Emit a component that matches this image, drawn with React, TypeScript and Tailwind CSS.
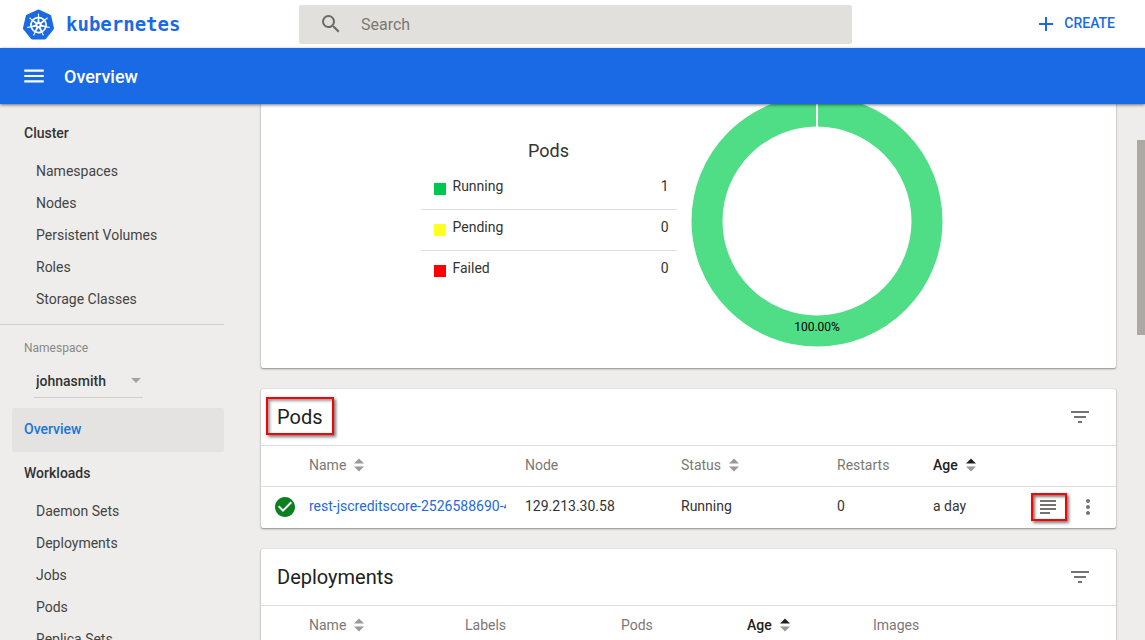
import React from "react";
import {
  MdAdd,
  MdCheckCircle,
  MdFilterList,
  MdMenu,
  MdMoreVert,
  MdSearch,
  MdSubject,
} from "react-icons/md";
import { SiKubernetes } from "react-icons/si";

const clusterItems = ["Namespaces", "Nodes", "Persistent Volumes", "Roles", "Storage Classes"];
const workloadItems = ["Daemon Sets", "Deployments", "Jobs", "Pods", "Replica Sets"];

const podStatus = [
  { label: "Running", count: 1, color: "bg-[#00c752]" },
  { label: "Pending", count: 0, color: "bg-[#ffff21]" },
  { label: "Failed", count: 0, color: "bg-[#ff0000]" },
];

type Column = { label: string; width: string; sort?: "none" | "asc" };

const podColumns: Column[] = [
  { label: "Name", width: "", sort: "none" },
  { label: "Node", width: "w-[156px]" },
  { label: "Status", width: "w-[156px]", sort: "none" },
  { label: "Restarts", width: "w-24" },
  { label: "Age", width: "w-24", sort: "asc" },
];

const deploymentColumns: Column[] = [
  { label: "Name", width: "", sort: "none" },
  { label: "Labels", width: "w-[156px]" },
  { label: "Pods", width: "w-[126px]" },
  { label: "Age", width: "w-[126px]", sort: "asc" },
  { label: "Images", width: "w-[243px]" },
];

function SortIcon({ active }: { active: boolean }) {
  return (
    <svg width="10" height="14" viewBox="0 0 10 14" aria-hidden="true">
      <path d="M5 0.5 L10 5.5 H0 Z" fill={active ? "#212121" : "#9b9893"} />
      <path d="M0 8.5 H10 L5 13.5 Z" fill="#9b9893" />
    </svg>
  );
}

function SidebarGroup({ title, items }: { title: string; items: string[] }) {
  return (
    <div>
      <a href="#" className="flex h-11 items-center pb-0.5 pl-6 font-medium text-[#333]">
        {title}
      </a>
      <ul>
        {items.map((item) => (
          <li key={item}>
            <a href="#" className="flex h-8 items-center pb-0.5 pl-9 text-[#444]">
              {item}
            </a>
          </li>
        ))}
      </ul>
    </div>
  );
}

function Card({ children }: { children: React.ReactNode }) {
  return (
    <section className="shrink-0 rounded-xs bg-white shadow-[0_1px_2px_#8d8983,0_0_1px_#c5c2bd]">
      {children}
    </section>
  );
}

function CardHeader({ title, highlighted }: { title: string; highlighted?: boolean }) {
  return (
    <div className="flex h-14 items-center justify-between pl-4 pr-6">
      <h2 className="relative text-xl text-[#212121]">
        {title}
        {highlighted && (
          <span className="absolute -inset-x-[11px] -top-1.5 -bottom-1 border-2 border-[#f00] shadow-[2px_2px_3px_#0008,inset_2px_2px_3px_#0006]" />
        )}
      </h2>
      <button type="button" aria-label={`Filter ${title}`} className="text-[#76736f]">
        <MdFilterList size={24} />
      </button>
    </div>
  );
}

function HeadRow({ columns, actions }: { columns: Column[]; actions?: boolean }) {
  return (
    <thead>
      <tr className="h-[41px] border-t border-[#dededc]">
        <td className="w-12" />
        {columns.map((c) => (
          <th
            key={c.label}
            scope="col"
            className={`${c.width} pb-0.5 text-left ${
              c.sort === "asc" ? "font-medium text-[#212121]" : "font-normal text-[#7b7875]"
            }`}
          >
            <span className="flex items-center gap-2">
              {c.label}
              {c.sort && <SortIcon active={c.sort === "asc"} />}
            </span>
          </th>
        ))}
        {actions && <td className="w-[87px]" />}
      </tr>
    </thead>
  );
}

export default function App() {
  return (
    <div className="flex h-screen flex-col overflow-hidden bg-[#eeedeb] font-[Roboto,sans-serif] text-sm text-[#333]">
      <header className="flex h-12 shrink-0 items-center bg-white">
        <a href="#" className="flex w-[299px] items-center gap-3 pl-[23px] text-[#196ae4]">
          <SiKubernetes size={31} />
          <span className="pt-0.5 font-['DejaVu_Sans_Mono',monospace] text-[19px] font-bold">kubernetes</span>
        </a>
        <label className="flex h-[39px] flex-1 items-center gap-[18px] rounded-xs bg-[#e1e0dc] pl-5 text-[#6c6965]">
          <MdSearch size={24} />
          <input
            type="search"
            aria-label="Search"
            placeholder="Search"
            className="min-w-0 flex-1 bg-transparent pt-0.5 text-base outline-none placeholder:text-[#7b7873]"
          />
        </label>
        <div className="flex w-[293px] justify-end pr-[30px]">
          <button type="button" className="flex items-center gap-1.5 font-medium text-[#196ae4]">
            <MdAdd size={24} />
            <span className="pb-0.5">CREATE</span>
          </button>
        </div>
      </header>

      <div className="relative z-10 flex h-14 shrink-0 items-center gap-[17px] bg-[#196ae4] pl-[21px] text-white shadow-[0_1px_3px_#0008]">
        <button type="button" aria-label="Toggle menu">
          <MdMenu size={26} />
        </button>
        <h1 className="pt-0.5 text-lg font-medium">Overview</h1>
      </div>

      <div className="flex min-h-0 flex-1">
        <nav className="w-56 shrink-0 overflow-hidden pt-2">
          <SidebarGroup title="Cluster" items={clusterItems} />
          <div className="mt-2 border-t border-[#cfcecc] pt-[13px]">
            <label htmlFor="namespace" className="block pl-6 text-xs leading-5 text-[#8a8885]">
              Namespace
            </label>
            <div className="mt-1.5 ml-[34px] flex h-[34px] w-[109px] items-center border-b border-[#cfcecc]">
              <select
                id="namespace"
                className="min-w-0 flex-1 appearance-none bg-transparent pl-0.5 font-medium text-[#333] outline-none"
              >
                <option>johnasmith</option>
              </select>
              <svg width="10" height="5" viewBox="0 0 10 5" className="mr-0.5 shrink-0" aria-hidden="true">
                <path d="M0 0 H10 L5 5 Z" fill="#a5a3a0" />
              </svg>
            </div>
          </div>
          <a
            href="#"
            className="mt-2.5 ml-3 flex h-11 items-center rounded-xs bg-[#e4e3e1] pb-0.5 pl-3 font-medium text-[#1a73e0]"
          >
            Overview
          </a>
          <SidebarGroup title="Workloads" items={workloadItems} />
        </nav>

        <main className="flex min-w-0 flex-1 flex-col gap-[21px] overflow-hidden pr-[21px] pl-[37px]">
          <div className="-mt-4 shrink-0">
            <Card>
              <div className="flex justify-center pb-5">
                <div className="w-64 pt-[47px]">
                  <h2 className="text-center text-lg leading-8">Pods</h2>
                  <ul className="divide-y divide-[#dededc] pt-0.5">
                    {podStatus.map((s) => (
                      <li key={s.label} className="flex h-[41px] items-start pt-[7px] pr-2 pl-[13px] leading-5">
                        <span className={`mt-[7px] mr-[7px] size-3 ${s.color}`} />
                        <span className="flex-1">{s.label}</span>
                        <span>{s.count}</span>
                      </li>
                    ))}
                  </ul>
                </div>
                <svg width="256" height="260" viewBox="0 0 256 260" className="mr-3 ml-3 shrink-0">
                  <circle cx="128" cy="133" r="110" fill="none" stroke="#4fdd86" strokeWidth="31" />
                  <rect x="127" y="4" width="2" height="36" fill="#fff" />
                  <text x="128" y="243" textAnchor="middle" fontSize="12" fill="#000">
                    100.00%
                  </text>
                </svg>
              </div>
            </Card>
          </div>

          <Card>
            <CardHeader title="Pods" highlighted />
            <table className="w-full table-fixed border-collapse">
              <HeadRow columns={podColumns} actions />
              <tbody>
                <tr className="h-[41px] border-t border-[#dededc]">
                  <td className="pl-3 text-[#0b8020]">
                    <MdCheckCircle size={24} />
                  </td>
                  <td className="pr-[19px] pb-0.5">
                    <a href="#" className="block overflow-hidden whitespace-nowrap text-[#2468de]">
                      rest-jscreditscore-2526588690-4
                    </a>
                  </td>
                  <td className="pb-0.5">129.213.30.58</td>
                  <td className="pb-0.5">Running</td>
                  <td className="pb-0.5">0</td>
                  <td className="pb-0.5">a day</td>
                  <td>
                    <div className="flex gap-4 pl-[7px] text-[#76736f]">
                      <button type="button" aria-label="View logs" className="relative">
                        <MdSubject size={24} />
                        <span className="absolute -inset-y-0.5 -left-[5px] -right-[7px] border-2 border-[#f00] shadow-[2px_2px_3px_#0008,inset_2px_2px_3px_#0008]" />
                      </button>
                      <button type="button" aria-label="More actions">
                        <MdMoreVert size={24} />
                      </button>
                    </div>
                  </td>
                </tr>
              </tbody>
            </table>
          </Card>

          <Card>
            <CardHeader title="Deployments" />
            <table className="w-full table-fixed border-collapse">
              <HeadRow columns={deploymentColumns} />
            </table>
          </Card>
        </main>

        <div className="w-2 shrink-0 pt-9">
          <div className="h-[195px] bg-[#aca8a4]" />
        </div>
      </div>
    </div>
  );
}
